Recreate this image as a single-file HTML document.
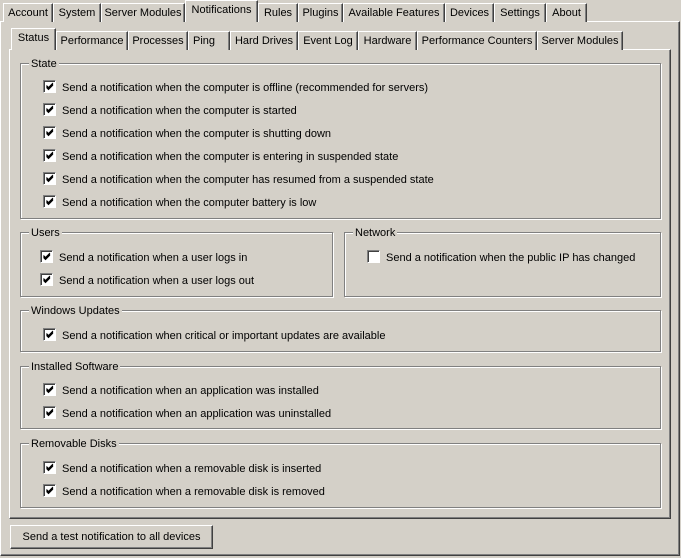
<!DOCTYPE html>
<html><head><style>
body{margin:0;width:681px;height:558px;background:#d4d0c8;font:11px "Liberation Sans",Arial,sans-serif;color:#000;position:relative;overflow:hidden}
.tab{position:absolute;height:18px;line-height:19px;text-align:center;border-top:1px solid #fff;border-left:1px solid #fff;border-right:1px solid #404040;box-shadow:inset -1px 0 #808080;background:#d4d0c8;white-space:nowrap}
.sel{z-index:3;height:21px;line-height:19px}
.panel{position:absolute;border-top:1px solid #fff;border-left:1px solid #fff;border-right:1px solid #404040;border-bottom:1px solid #404040;box-shadow:inset -1px -1px #808080}
.gb{position:absolute;border:1px solid #808080;box-shadow:inset 1px 1px #fff,1px 1px #fff}
.gt{position:absolute;top:-7px;left:8px;background:#d4d0c8;padding:0 2px;line-height:14px}
.cb{position:absolute;width:11px;height:11px;background:#fff;border-top:1px solid #808080;border-left:1px solid #808080;border-right:1px solid #fff;border-bottom:1px solid #fff;box-shadow:inset 1px 1px #404040}
.cb svg{position:absolute;left:1px;top:1px}
.lb{position:absolute;line-height:14px;white-space:nowrap}
.btn{position:absolute;left:10px;top:525px;width:201px;height:22px;line-height:23px;text-align:center;border-top:1px solid #fff;border-left:1px solid #fff;border-right:1px solid #404040;border-bottom:1px solid #404040;box-shadow:inset -1px -1px #808080}
</style></head><body>
<div class="panel" style="left:0;top:21px;width:678px;height:533px"></div>
<div class="tab" style="left:3px;top:3px;width:48px">Account</div>
<div class="tab" style="left:53px;top:3px;width:46px">System</div>
<div class="tab" style="left:101px;top:3px;width:82px">Server Modules</div>
<div class="tab sel" style="left:185px;top:0;width:71px">Notifications</div>
<div class="tab" style="left:258px;top:3px;width:38px">Rules</div>
<div class="tab" style="left:298px;top:3px;width:43px">Plugins</div>
<div class="tab" style="left:343px;top:3px;width:100px">Available Features</div>
<div class="tab" style="left:445px;top:3px;width:47px">Devices</div>
<div class="tab" style="left:494px;top:3px;width:50px">Settings</div>
<div class="tab" style="left:546px;top:3px;width:39px">About</div>

<div class="panel" style="left:9px;top:49px;width:660px;height:468px"></div>
<div class="tab sel" style="left:11px;top:28px;width:43px">Status</div>
<div class="tab" style="left:56px;top:31px;width:70px">Performance</div>
<div class="tab" style="left:128px;top:31px;width:58px">Processes</div>
<div class="tab" style="left:188px;top:31px;text-align:left;padding-left:4px;width:36px">Ping</div>
<div class="tab" style="left:230px;top:31px;width:66px">Hard Drives</div>
<div class="tab" style="left:298px;top:31px;width:58px">Event Log</div>
<div class="tab" style="left:358px;top:31px;width:57px">Hardware</div>
<div class="tab" style="left:417px;top:31px;width:118px">Performance Counters</div>
<div class="tab" style="left:537px;top:31px;width:84px">Server Modules</div>

<div class="gb" style="left:20px;top:63px;width:639px;height:154px"><span class="gt">State</span></div>
<div class="gb" style="left:20px;top:232px;width:311px;height:63px"><span class="gt">Users</span></div>
<div class="gb" style="left:344px;top:232px;width:315px;height:63px"><span class="gt">Network</span></div>
<div class="gb" style="left:20px;top:310px;width:639px;height:40px"><span class="gt">Windows Updates</span></div>
<div class="gb" style="left:20px;top:366px;width:639px;height:61px"><span class="gt">Installed Software</span></div>
<div class="gb" style="left:20px;top:443px;width:639px;height:63px"><span class="gt">Removable Disks</span></div>

<script>
var rows=[[43,87,1,"Send a notification when the computer is offline (recommended for servers)"],
[43,110,1,"Send a notification when the computer is started"],
[43,133,1,"Send a notification when the computer is shutting down"],
[43,156,1,"Send a notification when the computer is entering in suspended state"],
[43,179,1,"Send a notification when the computer has resumed from a suspended state"],
[43,202,1,"Send a notification when the computer battery is low"],
[40,257,1,"Send a notification when a user logs in"],
[40,280,1,"Send a notification when a user logs out"],
[367,257,0,"Send a notification when the public IP has changed"],
[43,335,1,"Send a notification when critical or important updates are available"],
[43,390,1,"Send a notification when an application was installed"],
[43,413,1,"Send a notification when an application was uninstalled"],
[43,468,1,"Send a notification when a removable disk is inserted"],
[43,491,1,"Send a notification when a removable disk is removed"]];
var h="";
rows.forEach(function(r){
h+='<div class="cb" style="left:'+r[0]+'px;top:'+(r[1]-7)+'px">'+(r[2]?'<svg width="10" height="10"><path d="M1.5 4.5 L3.5 6.5 L8 2 M1.5 5.5 L3.5 7.5 L8 3 M1.5 3.5 L3.5 5.5 L8 1" stroke="#000" stroke-width="1" fill="none"/></svg>':'')+'</div>';
h+='<div class="lb" style="left:'+(r[0]+19)+'px;top:'+(r[1]-6)+'px">'+r[3]+'</div>';
});
document.write(h);
</script>
<div class="btn">Send a test notification to all devices</div>
</body></html>
